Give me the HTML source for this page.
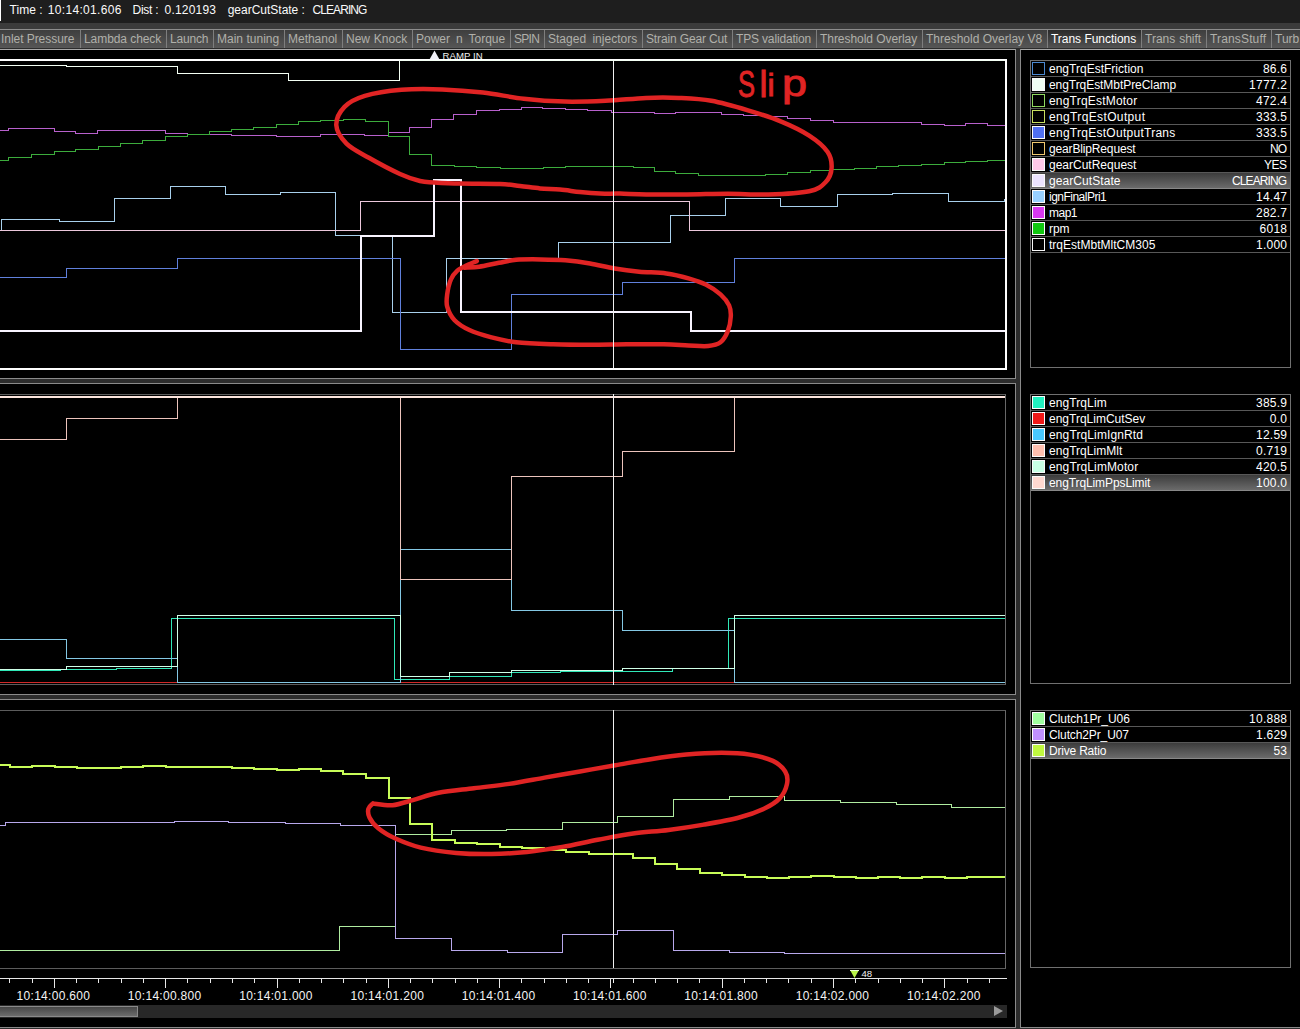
<!DOCTYPE html>
<html><head><meta charset="utf-8"><title>Trans Functions</title>
<style>
html,body{margin:0;padding:0;background:#000;}
body{width:1300px;height:1029px;position:relative;overflow:hidden;font-family:"Liberation Sans",sans-serif;font-size:12px;color:#fff;}
div{position:absolute;box-sizing:border-box;}
#title{left:0;top:0;width:1300px;height:23px;background:#1e1e1e;}
#title span{position:absolute;top:3px;line-height:14px;white-space:pre;color:#fafafa}
#tmark{left:0;top:0;width:1px;height:21px;background:#fff}
#band{left:0;top:23px;width:1300px;height:6px;background:#3b3b3b}
#tabs{left:0;top:29px;width:1300px;height:21px;background:linear-gradient(#3e3e3e,#585858);border-top:1px solid #8c8c8c;border-bottom:1px solid #a8a8a8;}
#tabs:after{content:"";position:absolute;left:0;right:0;bottom:0;height:1px;background:#2c2c2c}
.tab{top:0;height:19px;border-right:1px solid #7e7e7e;color:#b0b0aa;overflow:hidden;white-space:nowrap}
.tab span{position:absolute;left:3px;top:2px;line-height:14px}
.tab.act{background:linear-gradient(#2a2a2a,#555);color:#fff}
.frame{border:1px solid #6a6a6a}
.leg{left:1030px;width:261px;border:1px solid #707070;background:#000}
.row{position:relative;height:16px;border-bottom:1px solid #585858;width:100%;}
.row.sel{background:linear-gradient(#3c3c3c,#6a6a6a);border-bottom-color:#888}
.row i{position:absolute;left:1px;top:1px;width:13px;height:13px;box-sizing:border-box}
.row b{position:absolute;left:18px;top:1px;line-height:15px;font-weight:normal;white-space:nowrap}
.row u{position:absolute;right:3px;top:1px;line-height:15px;text-decoration:none}
.ax{top:989px;width:100px;text-align:center;line-height:14px;color:#f4f4f4;letter-spacing:0.3px}
  .sm{font-size:9.6px;line-height:10px;color:#f0f0f0;white-space:nowrap}
</style></head><body>
<div id="title"><span style="left:9.6px;letter-spacing:0.02px">Time :</span><span style="left:47.7px;letter-spacing:0.34px">10:14:01.606</span><span style="left:132.5px;letter-spacing:-0.24px">Dist :</span><span style="left:164.5px;letter-spacing:0.21px">0.120193</span><span style="left:227.7px;letter-spacing:-0.01px">gearCutState :</span><span style="left:312.5px;letter-spacing:-0.92px">CLEARING</span></div><div id="tmark"></div>
<div id="band"></div>
<div id="tabs"><div class="tab" style="left:-2px;width:83px"><span style="letter-spacing:-0.05px;word-spacing:0.00px">Inlet Pressure</span></div><div class="tab" style="left:81px;width:86px"><span style="letter-spacing:-0.07px;word-spacing:0.00px">Lambda check</span></div><div class="tab" style="left:167px;width:47px"><span style="letter-spacing:-0.19px;word-spacing:0.00px">Launch</span></div><div class="tab" style="left:214px;width:71px"><span style="letter-spacing:0.00px;word-spacing:0.16px">Main tuning</span></div><div class="tab" style="left:285px;width:58px"><span style="letter-spacing:-0.02px;word-spacing:0.00px">Methanol</span></div><div class="tab" style="left:343px;width:70px"><span style="letter-spacing:0.00px;word-spacing:0.51px">New Knock</span></div><div class="tab" style="left:413px;width:98px"><span style="letter-spacing:0.00px;word-spacing:2.69px">Power n Torque</span></div><div class="tab" style="left:511px;width:34px"><span style="letter-spacing:-0.70px;word-spacing:0.00px">SPIN</span></div><div class="tab" style="left:545px;width:98px"><span style="letter-spacing:0.01px;word-spacing:3.00px">Staged injectors</span></div><div class="tab" style="left:643px;width:90px"><span style="letter-spacing:-0.14px;word-spacing:0.00px">Strain Gear Cut</span></div><div class="tab" style="left:733px;width:84px"><span style="letter-spacing:-0.16px;word-spacing:0.00px">TPS validation</span></div><div class="tab" style="left:817px;width:106px"><span style="letter-spacing:-0.05px;word-spacing:0.00px">Threshold Overlay</span></div><div class="tab" style="left:923px;width:125px"><span style="letter-spacing:0.00px;word-spacing:0.08px">Threshold Overlay V8</span></div><div class="tab act" style="left:1048px;width:94px"><span style="letter-spacing:-0.03px;word-spacing:0.00px">Trans Functions</span></div><div class="tab" style="left:1142px;width:65px"><span style="letter-spacing:0.00px;word-spacing:0.63px">Trans shift</span></div><div class="tab" style="left:1207px;width:65px"><span style="letter-spacing:0.15px;word-spacing:0.00px">TransStuff</span></div><div class="tab" style="left:1272px;width:30px"><span>Turb</span></div></div>

<!-- panel frames -->
<div style="left:1016px;top:49px;width:4px;height:980px;background:#2c2c2c"></div>
<div style="left:0;top:379px;width:1016px;height:4px;background:#2c2c2c"></div>
<div style="left:0;top:695px;width:1016px;height:4px;background:#2c2c2c"></div>
<div style="left:0;top:1028px;width:1300px;height:1px;background:#2c2c2c"></div>
<div class="frame" style="left:-1px;top:49px;width:1017px;height:330px;border-color:transparent #8a8a8a #8a8a8a transparent"></div>
<div class="frame" style="left:-1px;top:383px;width:1017px;height:312px;border-color:#8a8a8a #8a8a8a #8a8a8a transparent"></div>
<div class="frame" style="left:-1px;top:699px;width:1017px;height:329px;border-color:#8a8a8a #8a8a8a #8a8a8a transparent"></div>
<div class="frame" style="left:1020px;top:49px;width:281px;height:979px;border-color:transparent transparent #8a8a8a #8a8a8a"></div>
<!-- inner chart frames -->
<div style="left:0;top:59px;width:1007px;height:311px;border:2px solid #fff;border-left:none"></div>
<div class="frame" style="left:-1px;top:394px;width:1007px;height:291px;border-color:#5c5c5c #686868 #5c5c5c transparent"></div>
<div class="frame" style="left:-1px;top:710px;width:1007px;height:259px;border-color:#5c5c5c #686868 #5c5c5c transparent"></div>

<svg width="1300" height="1029" viewBox="0 0 1300 1029" style="position:absolute;left:0;top:0" shape-rendering="crispEdges">
<g shape-rendering="crispEdges"><path d="M0 65.5H66V66.5H177V73.5H288V80.5H399.5V60.5H1005" stroke="#f4fff4" stroke-width="1" fill="none" /><path d="M0 130.5H8.9V128.5H54.4V131.5H75.8V133.5H97.5V130.5H165.3V133.5H187V134.5H231.4V135.5H276.7V136.5H320.6V134.5H364V135.5H388V132.5H409.2V127.5H431.5V119.5H453.4V114.5H476.4V110.5H499.5V109.5H521.7V107.5H542.3V108.5H565.4V109.5H587.6V110.5H611V112.5H654.3V113.5H675.8V112.5H721V114.5H743.7V115.5H765.5V116.5H787.7V118.5H810V120.5H833.4V122.5H921V124.5H944V125.5H965.5V123.5H987.7V125.5H1005" stroke="#b860cc" stroke-width="1" fill="none" /><path d="M0 160.5H8.9V157.5H31.4V154.5H54.4V151.5H75.8V149.5H98V146.5H120.3V143.5H142.5V140.5H165.3V136.5H187.8V134.5H209.2V131.5H231.4V129.5H253.7V127.5H276.7V124.5H298.6V121.5H320.6V120.5H343V119.5H365.3V121.5H388V136.5H409.2V154.5H431.5V165.5H454.2V166.5H476.4V167.5H500V168.5H543V167.5H565.4V166.5H633.3V167.5H654.3V171.5H675.8V173.5H698.2V175.5H765.5V174.5H787.7V172.5H810V170.5H832V169.5H854.4V168.5H876.6V166.5H898.8V165.5H921V164.5H944V162.5H965.5V161.5H987.7V160.5H1005" stroke="#3cac3c" stroke-width="1" fill="none" /><path d="M0 230.5H1.5V219.5H59V221.5H114V198.5H170V186.5H225V194.5H280.5V192.5H335.5V235.5H392V312.5H446.5V258.5H558V242.5H670V215.5H725.5V198.5H780.5V206.5H837.5V194.5H892V193.5H948.5V201.5H1004.5V199.5H1005" stroke="#a8d0ec" stroke-width="1" fill="none" /><path d="M0 230.5H360.5V201.5H689.5V230.5H1005" stroke="#ecc8dc" stroke-width="1" fill="none" /><path d="M0 277.5H66.5V268.5H177.5V258.5H400.5V349.5H511.5V294.5H622.5V282.5H734V258.5H1005" stroke="#6080dc" stroke-width="1" fill="none" /><path d="M0 331H361V236H434V180H461V312H691V331H1005" stroke="#f8f4ff" stroke-width="2" fill="none" /><path d="M0 670.5H60V669.5H116V668.5H171.5V618.5H394.5V679.5H449.5V676.5H511.5V672.5H560V671.5H672V668.5H728.5V618.5H1005" stroke="#30e8b8" stroke-width="1" fill="none" /><path d="M0 682.5H1005" stroke="#d02828" stroke-width="1" fill="none" /><path d="M0 639.5H66.5V658.5H177.5V682.5H400.5V549.5H511.5V610.5H622.5V630.5H734.5V682.5H1005" stroke="#84c8e4" stroke-width="1" fill="none" /><path d="M0 439.5H66.5V418.5H177.5V397.5H400.5V579.5H511.5V476.5H622.5V451.5H734.5V397.5H1005" stroke="#ecc4bc" stroke-width="1" fill="none" /><path d="M0 669.5H66.5V666.5H177.5V615.5H400.5V676.5H449.5V672.5H511.5V670.5H622.5V668.5H734.5V615.5H1005" stroke="#d0ffe8" stroke-width="1" fill="none" /><path d="M0 397H1005" stroke="#fce4dc" stroke-width="2" fill="none" /><path d="M0 950.5H339.5V926.5H395.5V834.5H451V830.5H506.5V829.5H562V822.5H617.5V816.5H673.5V799.5H729.5V796.5H784.5V800.5H840V802.5H896V804.5H951.5V807.5H1005" stroke="#b0eca0" stroke-width="1" fill="none" /><path d="M0 825.5H5.5V822.5H174V821.5H228V822.5H285V823.5H340V825.5H395.5V938.5H451.5V950.5H507V952.5H562.5V934.5H617.5V930.5H673.5V950.5H729.5V952.5H784.5V953.5H1005" stroke="#b8a8ec" stroke-width="1" fill="none" /><path d="M0 765H10V767H32V766H55V767H77V768H121V767H143V766H166V767H232V768H254V769H277V770H299V769H321V771H343V774H366V778H389V798H410V824H432V840H455V843H477V844H500V847H522V848H544V850H566V852H589V854H633V858H655V864H677V869H700V873H722V875H745V877H767V878H789V877H811V876H834V877H856V878H878V877H900V878H922V877H945V878H967V877H1005" stroke="#c8fc58" stroke-width="2" fill="none" /></g>
<g shape-rendering="geometricPrecision"><path d="M336.3 125.2C336.0 119.1 339.8 111.8 344.5 106.9C349.2 102.0 355.3 98.8 364.8 95.9C374.3 93.1 388.6 90.9 401.5 89.8C414.4 88.7 428.7 88.9 442.3 89.4C455.9 89.9 469.4 91.0 483.0 92.6C496.6 94.1 510.2 97.2 523.8 98.7C537.4 100.2 551.0 101.2 564.6 101.6C578.2 101.9 591.8 101.4 605.4 100.8C619.0 100.2 633.9 98.4 646.1 97.9C658.3 97.4 667.8 97.4 678.7 97.9C689.6 98.4 699.9 98.7 711.4 100.8C722.9 102.9 736.5 106.9 748.0 110.3C759.5 113.7 770.5 117.1 780.7 121.3C790.9 125.5 801.4 130.5 809.2 135.6C817.0 140.7 823.8 146.3 827.5 151.7C831.2 157.1 831.9 162.9 831.6 168.0C831.3 173.1 829.2 178.4 825.5 182.3C821.8 186.2 818.7 189.3 809.2 191.3C799.7 193.3 782.0 194.1 768.4 194.5C754.8 194.9 741.3 193.7 727.7 193.7C714.1 193.7 700.5 194.4 686.9 194.5C673.3 194.6 657.2 194.7 646.1 194.5C635.0 194.3 627.7 193.8 620.0 193.6C612.3 193.4 606.7 193.9 600.0 193.6C593.3 193.3 586.7 192.7 580.0 192.0C573.3 191.3 566.7 190.2 560.0 189.6C553.3 189.0 546.7 189.0 540.0 188.4C533.3 187.8 526.7 186.7 520.0 186.0C513.3 185.3 510.0 184.4 500.0 184.0C490.0 183.6 471.0 183.9 460.0 183.6C449.0 183.3 440.7 182.8 434.0 182.4C427.3 182.0 425.7 182.4 420.0 181.0C414.3 179.6 408.5 177.9 400.0 174.0C391.5 170.1 377.8 162.9 368.9 157.8C360.0 152.7 351.9 149.0 346.5 143.6C341.1 138.2 336.6 131.3 336.3 125.2" stroke="#e02424" stroke-width="4.5" fill="none" stroke-linecap="round" stroke-linejoin="round"/><path d="M476.8 261.1C475.1 261.8 470.2 263.7 466.9 265.3C463.6 266.9 459.8 268.5 457.1 270.9C454.4 273.3 452.5 275.6 450.9 279.5C449.2 283.4 447.8 289.8 447.2 294.3C446.6 298.8 446.0 302.3 447.2 306.6C448.4 310.9 450.9 316.3 454.6 320.2C458.3 324.1 463.2 327.1 469.4 330.0C475.5 332.9 483.7 335.3 491.5 337.4C499.3 339.4 505.9 341.1 516.2 342.3C526.5 343.5 540.8 343.9 553.1 344.3C565.4 344.7 577.7 344.8 590.0 344.8C602.3 344.8 614.6 344.4 626.9 344.3C639.2 344.2 653.5 344.1 663.8 344.3C674.1 344.5 681.1 345.2 688.5 345.5C695.9 345.8 702.9 346.5 708.2 346.0C713.5 345.5 717.2 344.8 720.5 342.3C723.8 339.8 726.1 335.5 727.8 331.2C729.5 326.9 730.6 320.8 730.8 316.5C731.0 312.2 730.8 309.1 729.1 305.4C727.4 301.7 724.4 297.8 720.5 294.3C716.6 290.8 711.0 287.2 705.7 284.5C700.4 281.8 695.1 280.2 688.5 278.3C681.9 276.4 674.5 274.5 666.3 273.4C658.1 272.3 647.8 272.5 639.2 271.7C630.6 270.9 622.8 269.9 614.6 268.5C606.4 267.1 598.2 264.9 590.0 263.5C581.8 262.1 573.6 261.0 565.4 260.3C557.2 259.6 549.0 259.5 540.8 259.4C532.6 259.3 523.2 259.2 516.2 259.8C509.2 260.4 505.1 261.7 498.9 262.8C492.7 263.9 484.9 265.9 479.2 266.7C473.5 267.5 466.9 267.5 464.5 267.7" stroke="#e02424" stroke-width="4.5" fill="none" stroke-linecap="round" stroke-linejoin="round"/><path d="M373.0 803.4C376.2 803.7 385.7 805.8 392.5 805.2C399.3 804.6 406.0 801.9 413.7 799.8C421.4 797.7 428.5 794.7 438.5 792.8C448.5 790.9 462.1 789.7 473.9 788.2C485.7 786.7 497.4 785.7 509.2 783.9C521.0 782.1 532.8 779.7 544.6 777.6C556.4 775.5 568.2 773.6 580.0 771.5C591.8 769.4 603.6 767.2 615.4 765.2C627.2 763.2 639.0 761.0 650.8 759.2C662.6 757.4 674.4 755.7 686.2 754.6C698.0 753.5 711.0 752.8 721.6 752.8C732.2 752.8 741.4 753.2 749.9 754.6C758.4 756.0 767.0 758.1 772.9 760.9C778.8 763.7 782.9 767.7 785.2 771.5C787.6 775.3 787.9 779.5 787.0 783.9C786.1 788.3 783.7 794.0 779.9 798.1C776.1 802.2 770.8 805.5 764.0 808.7C757.2 811.9 749.2 814.9 739.2 817.5C729.2 820.1 715.6 822.5 703.8 824.6C692.0 826.7 680.3 828.4 668.5 829.9C656.7 831.4 644.9 831.9 633.1 833.5C621.3 835.1 609.5 837.6 597.7 839.8C585.9 842.0 574.1 844.9 562.3 846.9C550.5 848.9 538.7 850.7 526.9 851.9C515.1 853.1 503.3 853.8 491.5 854.0C479.7 854.2 468.0 854.0 456.2 852.9C444.4 851.8 430.8 850.0 420.8 847.6C410.8 845.2 403.1 842.0 396.0 838.8C388.9 835.6 382.7 831.8 378.3 828.2C373.9 824.7 371.1 820.8 369.5 817.5C367.9 814.2 367.8 811.1 368.4 808.7C369.0 806.4 372.2 804.3 373.0 803.4" stroke="#e02424" stroke-width="4.5" fill="none" stroke-linecap="round" stroke-linejoin="round"/><g font-family="Liberation Sans, sans-serif" fill="#e02424" stroke="#e02424" stroke-width="0.9"><text><tspan x="738" y="97" font-size="36" textLength="17" lengthAdjust="spacingAndGlyphs">S</tspan><tspan x="759.5" y="97" font-size="36">l</tspan><tspan x="767.5" y="96" font-size="32">i</tspan><tspan x="782" y="96" font-size="37" textLength="25" lengthAdjust="spacingAndGlyphs">p</tspan></text></g></g>
<g shape-rendering="crispEdges"><path d="M613.5 61V368" stroke="#f0f0f0" stroke-width="1"/><path d="M613.5 394V685" stroke="#f0f0f0" stroke-width="1"/><path d="M613.5 710V968" stroke="#f0f0f0" stroke-width="1"/><path d="M613.5 978V983" stroke="#f0f0f0" stroke-width="1"/><path d="M0 978.5H1007M9.5 978V983M32.5 978V983M54.5 978V988M76.5 978V983M98.5 978V983M121.5 978V983M143.5 978V983M165.5 978V988M187.5 978V983M210.5 978V983M232.5 978V983M254.5 978V983M277.5 978V988M299.5 978V983M321.5 978V983M343.5 978V983M366.5 978V983M388.5 978V988M410.5 978V983M432.5 978V983M455.5 978V983M477.5 978V983M499.5 978V988M521.5 978V983M544.5 978V983M566.5 978V983M588.5 978V983M610.5 978V988M633.5 978V983M655.5 978V983M677.5 978V983M699.5 978V983M722.5 978V988M744.5 978V983M766.5 978V983M788.5 978V983M811.5 978V983M833.5 978V988M855.5 978V983M878.5 978V983M900.5 978V983M922.5 978V983M944.5 978V988M967.5 978V983M989.5 978V983" stroke="#e8e8e8" stroke-width="1" fill="none"/></g>
<g shape-rendering="geometricPrecision"><path d="M429.5 59.5L434.5 50.5L439.5 59.5Z" fill="#f0f0f8"/><path d="M850 970L859 970L854.5 978Z" fill="#b8f448"/><path d="M850 970.5H859" stroke="#e8ffd0" stroke-width="1"/></g>
</svg>
<div class="sm" style="left:442.5px;top:50.5px;letter-spacing:0.05px">RAMP IN</div>
<div class="sm" style="left:861.5px;top:968.5px">48</div>
<div class="ax" style="left:3.4px">10:14:00.600</div><div class="ax" style="left:114.7px">10:14:00.800</div><div class="ax" style="left:226.0px">10:14:01.000</div><div class="ax" style="left:337.3px">10:14:01.200</div><div class="ax" style="left:448.6px">10:14:01.400</div><div class="ax" style="left:559.9px">10:14:01.600</div><div class="ax" style="left:671.2px">10:14:01.800</div><div class="ax" style="left:782.5px">10:14:02.000</div><div class="ax" style="left:893.8px">10:14:02.200</div>
<!-- scrollbar -->
<div style="left:0;top:1005px;width:1007px;height:13px;background:#282828"></div>
<div style="left:0;top:1006px;width:138px;height:11px;background:linear-gradient(#464646,#6c6c6c);border:1px solid #8a8a8a;border-left:none"></div>
<div style="left:994px;top:1006px;width:0;height:0;border-left:9px solid #9a9a9a;border-top:5.5px solid transparent;border-bottom:5.5px solid transparent"></div>

<div class="leg" style="top:60px;height:308px"><div class="row"><i style="border:1px solid #4a88d0;background:#000"></i><b style="letter-spacing:0.01px">engTrqEstFriction</b><u style="letter-spacing:0.25px;right:2.75px">86.6</u></div><div class="row"><i style="background:#f0fff4;border:1px solid #fbfbfb"></i><b style="letter-spacing:-0.06px">engTrqEstMbtPreClamp</b><u style="letter-spacing:0.25px;right:2.75px">1777.2</u></div><div class="row"><i style="border:1px solid #90d860;background:#000"></i><b style="letter-spacing:0.20px">engTrqEstMotor</b><u style="letter-spacing:0.25px;right:2.75px">472.4</u></div><div class="row"><i style="border:1px solid #c8e060;background:#000"></i><b style="letter-spacing:0.36px">engTrqEstOutput</b><u style="letter-spacing:0.25px;right:2.75px">333.5</u></div><div class="row"><i style="background:#5070f0;border:1px solid #fbfbfb"></i><b style="letter-spacing:0.27px">engTrqEstOutputTrans</b><u style="letter-spacing:0.25px;right:2.75px">333.5</u></div><div class="row"><i style="border:1px solid #f0c870;background:#000"></i><b style="letter-spacing:-0.15px">gearBlipRequest</b><u style="letter-spacing:-1.00px;right:4.00px">NO</u></div><div class="row"><i style="background:#ffc8e8;border:1px solid #fbfbfb"></i><b style="letter-spacing:0.00px">gearCutRequest</b><u style="letter-spacing:-0.50px;right:3.50px">YES</u></div><div class="row sel"><i style="background:#ece4ff;border:1px solid #fbfbfb"></i><b style="letter-spacing:0.07px">gearCutState</b><u style="letter-spacing:-0.91px;right:3.91px">CLEARING</u></div><div class="row"><i style="background:#98d0ff;border:1px solid #fbfbfb"></i><b style="letter-spacing:-0.51px">ignFinalPri1</b><u style="letter-spacing:0.25px;right:2.75px">14.47</u></div><div class="row"><i style="background:#d838f0;border:1px solid #fbfbfb"></i><b style="letter-spacing:-0.50px">map1</b><u style="letter-spacing:0.25px;right:2.75px">282.7</u></div><div class="row"><i style="background:#10c810;border:1px solid #fbfbfb"></i><b style="letter-spacing:-0.09px">rpm</b><u style="letter-spacing:0.25px;right:2.75px">6018</u></div><div class="row"><i style="border:1px solid #f8f8f8;background:#000"></i><b style="letter-spacing:0.02px">trqEstMbtMltCM305</b><u style="letter-spacing:0.25px;right:2.75px">1.000</u></div></div>
<div class="leg" style="top:394px;height:290px"><div class="row"><i style="background:#20f0c0;border:1px solid #fbfbfb"></i><b style="letter-spacing:0.09px">engTrqLim</b><u style="letter-spacing:0.25px;right:2.75px">385.9</u></div><div class="row"><i style="background:#f01818;border:1px solid #fbfbfb"></i><b style="letter-spacing:-0.00px">engTrqLimCutSev</b><u style="letter-spacing:0.25px;right:2.75px">0.0</u></div><div class="row"><i style="background:#48c8ff;border:1px solid #fbfbfb"></i><b style="letter-spacing:0.12px">engTrqLimIgnRtd</b><u style="letter-spacing:0.25px;right:2.75px">12.59</u></div><div class="row"><i style="background:#ffc0b0;border:1px solid #fbfbfb"></i><b style="letter-spacing:0.04px">engTrqLimMlt</b><u style="letter-spacing:0.25px;right:2.75px">0.719</u></div><div class="row"><i style="background:#c8ffe4;border:1px solid #fbfbfb"></i><b style="letter-spacing:0.12px">engTrqLimMotor</b><u style="letter-spacing:0.25px;right:2.75px">420.5</u></div><div class="row sel"><i style="background:#ffd8d0;border:1px solid #fbfbfb"></i><b style="letter-spacing:-0.10px">engTrqLimPpsLimit</b><u style="letter-spacing:0.25px;right:2.75px">100.0</u></div></div>
<div class="leg" style="top:710px;height:258px"><div class="row"><i style="background:#a0ffa0;border:1px solid #fbfbfb"></i><b style="letter-spacing:-0.04px">Clutch1Pr_U06</b><u style="letter-spacing:0.25px;right:2.75px">10.888</u></div><div class="row"><i style="background:#c090ff;border:1px solid #fbfbfb"></i><b style="letter-spacing:-0.12px">Clutch2Pr_U07</b><u style="letter-spacing:0.25px;right:2.75px">1.629</u></div><div class="row sel"><i style="background:#c0f840;border:1px solid #fbfbfb"></i><b style="letter-spacing:-0.20px">Drive Ratio</b><u style="letter-spacing:0.25px;right:2.75px">53</u></div></div>
</body></html>
